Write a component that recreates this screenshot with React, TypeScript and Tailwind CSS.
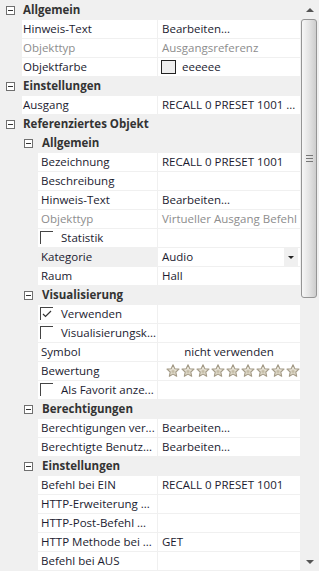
import React from "react";

type Row = {
  label: string;
  level: 1 | 2;
  cat?: boolean;
  value?: string;
  disabled?: boolean;
  check?: "on" | "off";
  swatch?: boolean;
  dropdown?: boolean;
  selected?: boolean;
  center?: boolean;
  stars?: boolean;
};

const rows: Row[] = [
  { cat: true, level: 1, label: "Allgemein" },
  { level: 1, label: "Hinweis-Text", value: "Bearbeiten..." },
  { level: 1, label: "Objekttyp", value: "Ausgangsreferenz", disabled: true },
  { level: 1, label: "Objektfarbe", value: "eeeeee", swatch: true },
  { cat: true, level: 1, label: "Einstellungen" },
  { level: 1, label: "Ausgang", value: "RECALL 0 PRESET 1001 ..." },
  { cat: true, level: 1, label: "Referenziertes Objekt" },
  { cat: true, level: 2, label: "Allgemein" },
  { level: 2, label: "Bezeichnung", value: "RECALL 0 PRESET 1001" },
  { level: 2, label: "Beschreibung" },
  { level: 2, label: "Hinweis-Text", value: "Bearbeiten..." },
  { level: 2, label: "Objekttyp", value: "Virtueller Ausgang Befehl", disabled: true },
  { level: 2, label: "Statistik", check: "off" },
  { level: 2, label: "Kategorie", value: "Audio", dropdown: true, selected: true },
  { level: 2, label: "Raum", value: "Hall" },
  { cat: true, level: 2, label: "Visualisierung" },
  { level: 2, label: "Verwenden", check: "on" },
  { level: 2, label: "Visualisierungsk...", check: "off" },
  { level: 2, label: "Symbol", value: "nicht verwenden", center: true },
  { level: 2, label: "Bewertung", stars: true },
  { level: 2, label: "Als Favorit anze...", check: "off" },
  { cat: true, level: 2, label: "Berechtigungen" },
  { level: 2, label: "Berechtigungen ver...", value: "Bearbeiten..." },
  { level: 2, label: "Berechtigte Benutz...", value: "Bearbeiten..." },
  { cat: true, level: 2, label: "Einstellungen" },
  { level: 2, label: "Befehl bei EIN", value: "RECALL 0 PRESET 1001" },
  { level: 2, label: "HTTP-Erweiterung ..." },
  { level: 2, label: "HTTP-Post-Befehl ..." },
  { level: 2, label: "HTTP Methode bei ...", value: "GET" },
  { level: 2, label: "Befehl bei AUS" },
];

const Expander = () => (
  <div className="w-[9px] h-[9px] border border-[#6f6f6f] bg-white flex items-center justify-center">
    <div className="w-[5px] h-px bg-[#333]" />
  </div>
);

const Star = () => (
  <svg width="14" height="14" viewBox="0 0 14 14">
    <defs>
      <linearGradient id="sg" x1="0" y1="0" x2="0" y2="1">
        <stop offset="0" stopColor="#f7f5ee" />
        <stop offset="1" stopColor="#d8d1be" />
      </linearGradient>
    </defs>
    <path
      d="M7 0.8 L8.8 4.7 L13 5.1 L9.8 8 L10.7 12.3 L7 10.1 L3.3 12.3 L4.2 8 L1 5.1 L5.2 4.7 Z"
      fill="url(#sg)"
      stroke="#a39a86"
      strokeWidth="1.1"
      strokeLinejoin="round"
    />
    <path d="M7 5 L7.8 6.6 L9.3 6.8 L8.2 7.8 L8.5 9.2 L7 8.5 L5.5 9.2 L5.8 7.8 L4.7 6.8 L6.2 6.6 Z" fill="#c4bca7" />
  </svg>
);

const Checkbox = ({ on }: { on: boolean }) => (
  <div className="w-[13px] h-[13px] border-l border-t border-[#444] bg-white relative mt-[-2px]">
    {on && (
      <svg className="absolute left-[1px] top-[2px]" width="10" height="8" viewBox="0 0 10 8">
        <polyline points="1,4 3.5,6.5 9,1" fill="none" stroke="#333" strokeWidth="1.2" />
      </svg>
    )}
  </div>
);

function CategoryRow({ row }: { row: Row }) {
  return (
    <div className="h-[18px] mb-px flex items-center">
      <div className={row.level === 1 ? "ml-[6px]" : "ml-[24px]"}>
        <Expander />
      </div>
      <span
        className={`font-bold text-[#333] whitespace-nowrap ${row.level === 1 ? "ml-[8px]" : "ml-[9px]"}`}
      >
        {row.label}
      </span>
    </div>
  );
}

function PropRow({ row }: { row: Row }) {
  const indent = row.level === 1 ? "w-[22px]" : "w-[38px]";
  const textColor = row.disabled ? "text-[#8d8d8d]" : "text-[#1b1b30]";
  return (
    <div className="h-[18px] mb-px flex">
      <div className={`${indent} shrink-0`} />
      <div
        className={`flex-1 flex items-center overflow-hidden whitespace-nowrap ${row.selected ? "bg-[#f0f0f0]" : "bg-white"} ${row.level === 1 ? "pl-px" : "pl-[3px]"} ${textColor}`}
      >
        {row.check ? (
          <>
            <div className="ml-[-1px]">
              <Checkbox on={row.check === "on"} />
            </div>
            <span className="ml-[8px]">{row.label}</span>
          </>
        ) : (
          row.label
        )}
      </div>
      <div className="w-px shrink-0" />
      <div
        className={`w-[142px] shrink-0 bg-white flex items-center whitespace-nowrap overflow-hidden ${textColor} ${row.center ? "justify-center" : "pl-[4px]"}`}
      >
        {row.swatch && <div className="w-[15px] h-[14px] border border-[#222] bg-[#eeeeee] mr-[6px] ml-[-1px]" />}
        {row.stars ? (
          <div className="flex gap-px ml-[4px]">
            {Array.from({ length: 9 }).map((_, i) => (
              <Star key={i} />
            ))}
          </div>
        ) : row.center ? (
          <span>{row.value}</span>
        ) : (
          <span className="flex-1">{row.value}</span>
        )}
        {row.dropdown && (
          <div className="w-[14px] h-[18px] bg-[#f0f0f0] flex items-center justify-center mr-[2px]">
            <div className="w-0 h-0 border-l-[3px] border-r-[3px] border-t-[3px] border-l-transparent border-r-transparent border-t-[#222]" />
          </div>
        )}
      </div>
    </div>
  );
}

function ScrollBar() {
  return (
    <div className="w-[19px] h-full flex flex-col items-center bg-[#f0f0f0]">
      <div className="h-[19px] w-full flex items-center justify-center">
        <div className="w-0 h-0 border-l-[4px] border-r-[4px] border-b-[4px] border-l-transparent border-r-transparent border-b-[#555]" />
      </div>
      <div className="w-[16px] h-[279px] ml-[1px] mr-[2px] self-start rounded-[3px] border border-[#959595] bg-gradient-to-r from-[#f7f7f7] via-[#e4e4e4] to-[#cdcdcd] flex flex-col items-center justify-center gap-[2px]">
        <div className="w-[7px] h-px bg-[#777]" />
        <div className="w-[7px] h-px bg-[#777]" />
        <div className="w-[7px] h-px bg-[#777]" />
      </div>
      <div className="flex-1" />
      <div className="h-[19px] w-full flex items-center justify-center">
        <div className="w-0 h-0 border-l-[4px] border-r-[4px] border-t-[4px] border-l-transparent border-r-transparent border-t-[#555]" />
      </div>
    </div>
  );
}

export default function App() {
  return (
    <div className="w-[319px] h-[571px] bg-[#f0f0f0] flex overflow-hidden font-['Segoe_UI','Open_Sans',sans-serif] text-[11.5px] leading-none">
      <div className="w-[300px] pt-px">
        {rows.map((r, i) => (r.cat ? <CategoryRow key={i} row={r} /> : <PropRow key={i} row={r} />))}
      </div>
      <ScrollBar />
    </div>
  );
}
